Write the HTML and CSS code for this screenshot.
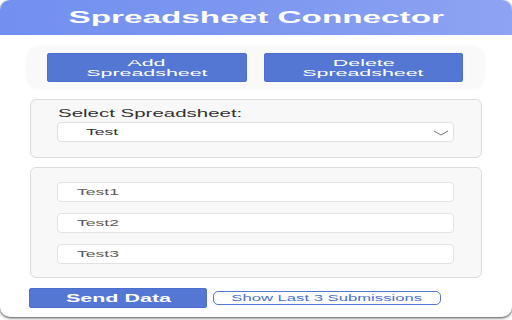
FILE: index.html
```html
<!DOCTYPE html>
<html>
<head>
<meta charset="utf-8">
<link rel="stylesheet" href="styles.css">
</head>
<body>
<div class="app">
  <header class="header"><h1 class="title"><span class="sx sx-title">Spreadsheet Connector</span></h1></header>
  <main class="main">
    <section class="actions">
      <button class="btn btn-primary btn-tall"><span class="sx sx-btn">Add</span><span class="sx sx-btn">Spreadsheet</span></button>
      <button class="btn btn-primary btn-tall"><span class="sx sx-btn">Delete</span><span class="sx sx-btn">Spreadsheet</span></button>
    </section>
    <section class="panel panel-select">
      <div class="label"><span class="sx sx-label">Select Spreadsheet:</span></div>
      <div class="select">
        <span class="sx sx-input">Test</span>
        <svg class="chev" width="16" height="6" viewBox="0 0 16 6"><polyline points="1,1 8,5 15,1" fill="none" stroke="#777" stroke-width="1"/></svg>
      </div>
    </section>
    <section class="panel panel-fields">
      <div class="field"><span class="sx sx-input">Test1</span></div>
      <div class="field"><span class="sx sx-input">Test2</span></div>
      <div class="field"><span class="sx sx-input">Test3</span></div>
    </section>
    <section class="footer">
      <button class="btn btn-primary btn-send"><span class="sx sx-send">Send Data</span></button>
      <button class="btn btn-outline"><span class="sx sx-show">Show Last 3 Submissions</span></button>
    </section>
  </main>
</div>
</body>
</html>
```
FILE: styles.css
```css
html, body {
  margin: 0;
  padding: 0;
  background: #ffffff;
}
body {
  font-family: "Liberation Sans", Arial, sans-serif;
  width: 512px;
  height: 320px;
  overflow: hidden;
}
.app {
  height: 317px;
  border-radius: 10px;
  overflow: hidden;
  background: #ffffff;
  box-shadow: 0 1px 3px rgba(0, 0, 0, 0.75);
  display: flex;
  flex-direction: column;
}
.header {
  height: 35px;
  flex: none;
  background: linear-gradient(90deg, #7190f0 0%, #7d97f0 50%, #8ea3f2 100%);
  display: flex;
  align-items: center;
  justify-content: center;
}
.title {
  margin: 0;
  font-size: 16px;
  font-weight: bold;
  color: #ffffff;
  line-height: 18px;
  padding-top: 1px;
}
.sx {
  display: inline-block;
  white-space: nowrap;
}
.sx-title { transform: scaleX(2.08); }
.sx-btn { transform: scaleX(2.25); line-height: 10px; }
.sx-label { transform: scaleX(1.86); transform-origin: left center; }
.sx-input { transform: scaleX(1.95); transform-origin: left center; }
.sx-send { transform: scaleX(2.15); }
.sx-show { transform: scaleX(1.96); }

.main {
  padding: 0 30px;
  display: flex;
  flex-direction: column;
}
.actions {
  margin: 13px -1px 0 -2px;
  height: 39px;
  box-sizing: border-box;
  padding: 5px 20px 5px 19px;
  display: flex;
  gap: 17px;
  background: #f9f9f9;
  border-radius: 9px;
  box-shadow: 0 0 5px rgba(0, 0, 0, 0.07);
}
.btn {
  font-family: "Liberation Sans", Arial, sans-serif;
  border: none;
  padding: 0;
  margin: 0;
  cursor: pointer;
}
.btn-primary {
  background: #5577d4;
  color: #ffffff;
  border-radius: 3px;
  box-shadow: inset 0 0 0 1px #4b6fd0;
}
.btn-tall {
  flex: 1;
  font-size: 9.5px;
  display: flex;
  flex-direction: column;
  align-items: center;
  justify-content: center;
  gap: 0;
  padding-top: 1px;
}
.panel {
  background: #f8f8f8;
  border: 1px solid #dddddd;
  border-radius: 6px;
  box-sizing: border-box;
}
.panel-select {
  margin-top: 12px;
  height: 59px;
  padding: 6px 27px 0 26px;
}
.label {
  font-size: 11px;
  line-height: 14px;
  color: #333333;
  padding-left: 1px;
  height: 16px;
}
.select {
  height: 20px;
  box-sizing: border-box;
  background: #ffffff;
  border: 1px solid #e0e0e0;
  border-radius: 4px;
  display: flex;
  align-items: center;
  justify-content: space-between;
  padding: 0 4px 0 28px;
  font-size: 9px;
  color: #333333;
}
.chev {
  margin-top: 1px;
}
.panel-fields {
  margin-top: 9px;
  height: 111px;
  padding: 14px 27px 0 26px;
  display: flex;
  flex-direction: column;
  gap: 11px;
}
.field {
  height: 20px;
  box-sizing: border-box;
  background: #ffffff;
  border: 1px solid #e2e2e2;
  border-radius: 4px;
  display: flex;
  align-items: center;
  padding-left: 19px;
  font-size: 9px;
  color: #5a5a5a;
}
.footer {
  margin: 10px 0 0 -1px;
  display: flex;
  align-items: center;
  gap: 6px;
}
.btn-send {
  width: 178px;
  height: 20px;
  font-size: 10px;
  font-weight: bold;
}
.btn-outline {
  width: 228px;
  height: 14px;
  box-sizing: border-box;
  background: #ffffff;
  border: 1px solid #5577d4;
  border-radius: 5px;
  color: #4a6fd0;
  font-size: 8.5px;
  line-height: 10px;
}
```
